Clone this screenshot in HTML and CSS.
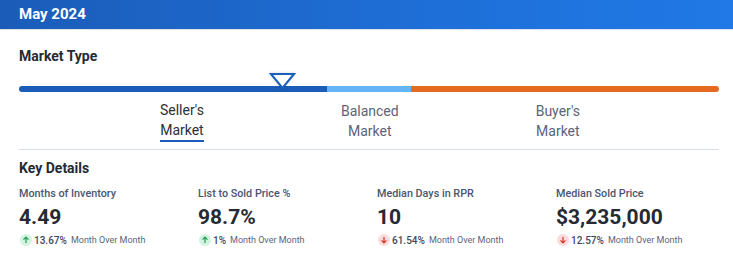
FILE: index.html
```html
<!DOCTYPE html>
<html>
<head>
<meta charset="utf-8">
<link rel="stylesheet" href="styles.css">
</head>
<body>
<header class="hdr">May 2024</header>
<main class="content">
  <h2 class="title title-market">Market Type</h2>
  <div class="meter">
    <div class="seg seg-seller"></div>
    <div class="seg seg-balanced"></div>
    <div class="seg seg-buyer"></div>
    <svg class="marker" width="27" height="18" viewBox="0 0 27 18">
      <path d="M2 2 H25 L13.5 16 Z" fill="#fff" stroke="#1b5fbd" stroke-width="2" stroke-linejoin="miter"/>
    </svg>
  </div>
  <div class="labels">
    <div class="label active">Seller's<br>Market</div>
    <div class="label">Balanced<br>Market</div>
    <div class="label">Buyer's<br>Market</div>
  </div>
  <div class="sep"></div>
  <h2 class="title title-key">Key Details</h2>
  <div class="stats">
    <div class="stat">
      <div class="stat-label">Months of Inventory</div>
      <div class="stat-value">4.49</div>
      <div class="stat-change">
        <span class="ico up"><svg width="8" height="8" viewBox="0 0 8 8"><path d="M4 7V1.3M1.5 3.6L4 1.1 6.5 3.6" fill="none" stroke="#1f9d55" stroke-width="1.2"/></svg></span>
        <span class="pct">13.67%</span><span class="mom">Month Over Month</span>
      </div>
    </div>
    <div class="stat">
      <div class="stat-label">List to Sold Price %</div>
      <div class="stat-value">98.7%</div>
      <div class="stat-change">
        <span class="ico up"><svg width="8" height="8" viewBox="0 0 8 8"><path d="M4 7V1.3M1.5 3.6L4 1.1 6.5 3.6" fill="none" stroke="#1f9d55" stroke-width="1.2"/></svg></span>
        <span class="pct">1%</span><span class="mom">Month Over Month</span>
      </div>
    </div>
    <div class="stat">
      <div class="stat-label">Median Days in RPR</div>
      <div class="stat-value">10</div>
      <div class="stat-change">
        <span class="ico down"><svg width="8" height="8" viewBox="0 0 8 8"><path d="M4 1V6.7M1.5 4.4L4 6.9 6.5 4.4" fill="none" stroke="#d93025" stroke-width="1.2"/></svg></span>
        <span class="pct">61.54%</span><span class="mom">Month Over Month</span>
      </div>
    </div>
    <div class="stat">
      <div class="stat-label">Median Sold Price</div>
      <div class="stat-value">$3,235,000</div>
      <div class="stat-change">
        <span class="ico down"><svg width="8" height="8" viewBox="0 0 8 8"><path d="M4 1V6.7M1.5 4.4L4 6.9 6.5 4.4" fill="none" stroke="#d93025" stroke-width="1.2"/></svg></span>
        <span class="pct">12.57%</span><span class="mom">Month Over Month</span>
      </div>
    </div>
  </div>
</main>
</body>
</html>
```

FILE: styles.css
```css
* { box-sizing: border-box; }
html, body { margin: 0; padding: 0; background: #fff; }
body { font-family: Roboto, "Liberation Sans", Arial, sans-serif; color: #262a33; }

.hdr {
  height: 30px;
  padding: 5px 0 0 19px;
  background: linear-gradient(90deg, #1b5cb8 0%, #1e6ed6 55%, #2079e6 100%);
  border-bottom: 1px solid #dfe4ec;
  color: #fff;
  font-size: 15px;
  font-weight: 700;
  line-height: 18px;
}

.content { padding: 0 14px 0 19px; }

.title {
  margin: 0;
  font-size: 14px;
  font-weight: 700;
  line-height: 18px;
  color: #262a33;
}
.title-market { margin-top: 17px; }
.title-key { margin-top: 9px; }

.meter {
  position: relative;
  display: flex;
  height: 6px;
  margin-top: 21px;
  border-radius: 3px;
}
.seg { height: 6px; }
.seg-seller { width: 308px; background: #1b5cb8; border-radius: 3px 0 0 3px; }
.seg-balanced { width: 84px; background: #64b4f6; }
.seg-buyer { flex: 1; background: #e36a1f; border-radius: 0 3px 3px 0; }
.marker {
  position: absolute;
  left: 250px;
  top: -14px;
  filter: drop-shadow(0 0 1.5px rgba(0,0,0,0.18));
}

.labels {
  display: flex;
  justify-content: center;
  gap: 137px;
  margin-top: 9px;
  padding-left: 2px;
}
.label {
  text-align: center;
  font-size: 14px;
  line-height: 20px;
  color: #5b6478;
  width: fit-content;
}
.label.active {
  color: #2b2f38;
  border-bottom: 2px solid #1b5cb8;
  line-height: 19.5px;
}

.sep {
  height: 1px;
  background: #d8dee9;
  margin-top: 7px;
}

.stats {
  display: grid;
  grid-template-columns: repeat(4, 1fr);
  column-gap: 16px;
  margin-top: 10px;
}
.stat-label {
  font-size: 10.8px;
  line-height: 14px;
  color: #4a556e;
  font-weight: 500;
}
.stat-value {
  font-size: 21px;
  font-weight: 700;
  line-height: 26px;
  margin-top: 3px;
  color: #262a33;
}
.stat-change {
  display: flex;
  align-items: center;
  margin-top: 3px;
  height: 14px;
}
.ico {
  width: 12px;
  height: 12px;
  border-radius: 50%;
  display: inline-flex;
  align-items: center;
  justify-content: center;
  margin: 0 2px 0 1px;
}
.ico.up { background: #d3f3df; }
.ico.down { background: #fbdcdc; }
.pct {
  font-size: 10px;
  font-weight: 500;
  color: #3d4760;
  margin-right: 4px;
}
.mom {
  font-size: 9px;
  color: #5b6478;
}
```
